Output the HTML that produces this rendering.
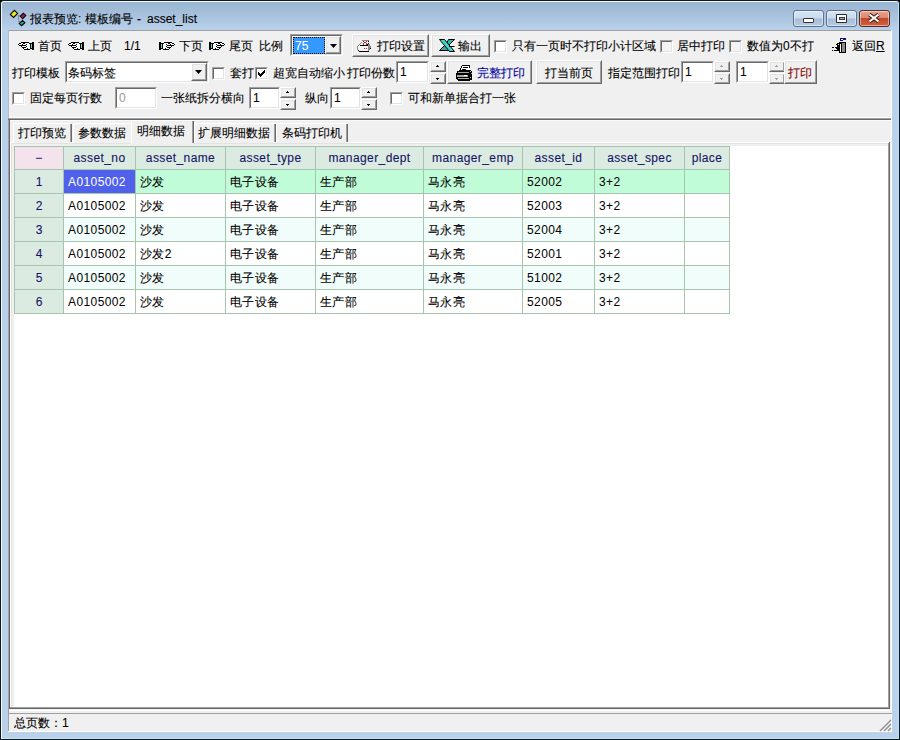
<!DOCTYPE html>
<html><head><meta charset="utf-8"><style>
html,body{margin:0;padding:0;width:900px;height:740px;overflow:hidden;background:#000}
body>div,body>svg{position:absolute;box-sizing:content-box}
.t{position:absolute;font-family:"Liberation Sans",sans-serif;font-size:12px;line-height:14px;white-space:nowrap;-webkit-text-stroke:0.1px currentColor}
</style></head><body>
<div style="left:0;top:0;width:900px;height:740px;background:#000"></div>
<div style="left:0;top:0;width:898px;height:738px;border:1px solid #0c1a22;border-radius:4px 4px 0 0;background:#b9d1ea;overflow:hidden"><div style="position:absolute;left:0;top:0;width:898px;height:738px;border-radius:3px 3px 0 0;box-shadow:inset 1px 1px 0 #f4f8fc, inset -1px -1px 0 #bfe0ee"></div></div>
<div style="left:2px;top:2px;width:896px;height:28px;background:linear-gradient(#99b4d1,#b9d1ea);border-radius:2px 2px 0 0"></div>
<svg style="left:0;top:0" width="30" height="30">
<path d="M17.5 15.5 H20 M18.5 15.5 V21.5 H20.5" fill="none" stroke="#8c8c8c"/>
<path d="M14.5 10.3 L17.6 13.4 L13.5 17.5 L10.3 14.4 Z" fill="#f0ea10" stroke="#000" stroke-width="1.1"/>
<path d="M23.3 13.2 L25.8 15.6 L22.6 18.7 L20.2 16.3 Z" fill="#b0106a" stroke="#000" stroke-width="1.1"/>
<path d="M22.5 20.4 L24.9 22.7 L21.6 25.7 L19.2 23.4 Z" fill="#20a8a8" stroke="#000" stroke-width="1.1"/>
</svg>
<div class="t" style="left:30px;top:12px;color:#000;">报表预览: 模板编号</div>
<div class="t" style="left:137px;top:12px;color:#000;">-</div>
<div class="t" style="left:147px;top:12px;color:#000;">asset_list</div>
<div style="left:793px;top:10px;width:29px;height:15px;border:1px solid #5e7290;border-radius:3px;background:linear-gradient(#d6e4f2 0%,#c8daee 48%,#a6bdd6 52%,#b6cce4 100%);box-shadow:inset 0 0 0 1px rgba(255,255,255,0.45)"></div>
<div style="left:826px;top:10px;width:29px;height:15px;border:1px solid #5e7290;border-radius:3px;background:linear-gradient(#d6e4f2 0%,#c8daee 48%,#a6bdd6 52%,#b6cce4 100%);box-shadow:inset 0 0 0 1px rgba(255,255,255,0.45)"></div>
<div style="left:859px;top:10px;width:29px;height:15px;border:1px solid #5b2a22;border-radius:3px;background:linear-gradient(#e8a190 0%,#d98a75 45%,#c4482c 50%,#d2623f 100%);box-shadow:inset 0 0 0 1px rgba(255,255,255,0.45)"></div>
<div style="left:803px;top:18px;width:9px;height:3px;background:#fff;border:1px solid #333;border-radius:1px"></div>
<div style="left:836px;top:14px;width:11px;height:9px;background:#2c2c34;border-radius:1px"></div>
<div style="left:837px;top:15px;width:9px;height:7px;background:#fafafa"></div>
<div style="left:839px;top:17px;width:6px;height:3px;background:#3a3a44"></div>
<div style="left:840px;top:18px;width:4px;height:1px;background:#9aa8b8"></div>
<svg style="left:868px;top:13px" width="12" height="10"><path d="M1.5 1.5 L10.5 8.5 M10.5 1.5 L1.5 8.5" stroke="#3a1a14" stroke-width="4"/><path d="M1.5 1.5 L10.5 8.5 M10.5 1.5 L1.5 8.5" stroke="#fff" stroke-width="2.2"/></svg>
<div style="left:8px;top:30px;width:884px;height:702px;background:#f0f0f0"></div>
<div style="left:8px;top:30px;width:884px;height:1px;background:#a0a0a0"></div>
<div style="left:8px;top:30px;width:1px;height:88px;background:#b4bcc6"></div>
<div style="left:8px;top:118px;width:1px;height:614px;background:#a0a0a0"></div>
<div style="left:891px;top:30px;width:1px;height:702px;background:#fff"></div>
<div style="left:8px;top:731px;width:884px;height:1px;background:#fff"></div>
<div style="left:9px;top:117px;width:882px;height:1px;background:#fff"></div>
<div style="left:8px;top:118px;width:883px;height:1px;background:#a0a0a0"></div>
<div style="left:8px;top:119px;width:883px;height:1px;background:#696969"></div>
<div style="left:10px;top:120px;width:881px;height:1px;background:#fafafa"></div>
<svg style="left:18px;top:42px" width="16" height="8" shape-rendering="crispEdges"><rect x="3" y="0" width="1" height="1" fill="#000"/><rect x="4" y="0" width="1" height="1" fill="#000"/><rect x="5" y="0" width="1" height="1" fill="#000"/><rect x="6" y="0" width="1" height="1" fill="#000"/><rect x="7" y="0" width="1" height="1" fill="#000"/><rect x="8" y="0" width="1" height="1" fill="#000"/><rect x="9" y="0" width="1" height="1" fill="#000"/><rect x="10" y="0" width="1" height="1" fill="#000"/><rect x="14" y="0" width="1" height="1" fill="#000"/><rect x="15" y="0" width="1" height="1" fill="#000"/><rect x="1" y="1" width="1" height="1" fill="#000"/><rect x="2" y="1" width="1" height="1" fill="#000"/><rect x="3" y="1" width="1" height="1" fill="#fff"/><rect x="4" y="1" width="1" height="1" fill="#fff"/><rect x="5" y="1" width="1" height="1" fill="#000"/><rect x="6" y="1" width="1" height="1" fill="#000"/><rect x="7" y="1" width="1" height="1" fill="#fff"/><rect x="8" y="1" width="1" height="1" fill="#fff"/><rect x="9" y="1" width="1" height="1" fill="#fff"/><rect x="10" y="1" width="1" height="1" fill="#fff"/><rect x="11" y="1" width="1" height="1" fill="#000"/><rect x="12" y="1" width="1" height="1" fill="#000"/><rect x="13" y="1" width="1" height="1" fill="#000"/><rect x="14" y="1" width="1" height="1" fill="#000"/><rect x="15" y="1" width="1" height="1" fill="#000"/><rect x="0" y="2" width="1" height="1" fill="#000"/><rect x="1" y="2" width="1" height="1" fill="#fff"/><rect x="2" y="2" width="1" height="1" fill="#fff"/><rect x="3" y="2" width="1" height="1" fill="#fff"/><rect x="4" y="2" width="1" height="1" fill="#000"/><rect x="5" y="2" width="1" height="1" fill="#fff"/><rect x="6" y="2" width="1" height="1" fill="#fff"/><rect x="7" y="2" width="1" height="1" fill="#fff"/><rect x="8" y="2" width="1" height="1" fill="#000"/><rect x="9" y="2" width="1" height="1" fill="#fff"/><rect x="10" y="2" width="1" height="1" fill="#fff"/><rect x="11" y="2" width="1" height="1" fill="#fff"/><rect x="12" y="2" width="1" height="1" fill="#000"/><rect x="13" y="2" width="1" height="1" fill="#70d8b8"/><rect x="14" y="2" width="1" height="1" fill="#000"/><rect x="15" y="2" width="1" height="1" fill="#000"/><rect x="1" y="3" width="1" height="1" fill="#000"/><rect x="2" y="3" width="1" height="1" fill="#000"/><rect x="3" y="3" width="1" height="1" fill="#000"/><rect x="4" y="3" width="1" height="1" fill="#000"/><rect x="5" y="3" width="1" height="1" fill="#000"/><rect x="6" y="3" width="1" height="1" fill="#000"/><rect x="7" y="3" width="1" height="1" fill="#000"/><rect x="8" y="3" width="1" height="1" fill="#fff"/><rect x="9" y="3" width="1" height="1" fill="#fff"/><rect x="10" y="3" width="1" height="1" fill="#fff"/><rect x="11" y="3" width="1" height="1" fill="#fff"/><rect x="12" y="3" width="1" height="1" fill="#000"/><rect x="13" y="3" width="1" height="1" fill="#70d8b8"/><rect x="14" y="3" width="1" height="1" fill="#000"/><rect x="15" y="3" width="1" height="1" fill="#000"/><rect x="3" y="4" width="1" height="1" fill="#000"/><rect x="4" y="4" width="1" height="1" fill="#fff"/><rect x="5" y="4" width="1" height="1" fill="#fff"/><rect x="6" y="4" width="1" height="1" fill="#fff"/><rect x="7" y="4" width="1" height="1" fill="#fff"/><rect x="8" y="4" width="1" height="1" fill="#000"/><rect x="9" y="4" width="1" height="1" fill="#fff"/><rect x="10" y="4" width="1" height="1" fill="#fff"/><rect x="11" y="4" width="1" height="1" fill="#fff"/><rect x="12" y="4" width="1" height="1" fill="#000"/><rect x="13" y="4" width="1" height="1" fill="#70d8b8"/><rect x="14" y="4" width="1" height="1" fill="#000"/><rect x="15" y="4" width="1" height="1" fill="#000"/><rect x="4" y="5" width="1" height="1" fill="#000"/><rect x="5" y="5" width="1" height="1" fill="#000"/><rect x="6" y="5" width="1" height="1" fill="#000"/><rect x="7" y="5" width="1" height="1" fill="#000"/><rect x="8" y="5" width="1" height="1" fill="#fff"/><rect x="9" y="5" width="1" height="1" fill="#fff"/><rect x="10" y="5" width="1" height="1" fill="#fff"/><rect x="11" y="5" width="1" height="1" fill="#fff"/><rect x="12" y="5" width="1" height="1" fill="#000"/><rect x="13" y="5" width="1" height="1" fill="#70d8b8"/><rect x="14" y="5" width="1" height="1" fill="#000"/><rect x="15" y="5" width="1" height="1" fill="#000"/><rect x="5" y="6" width="1" height="1" fill="#000"/><rect x="6" y="6" width="1" height="1" fill="#fff"/><rect x="7" y="6" width="1" height="1" fill="#fff"/><rect x="8" y="6" width="1" height="1" fill="#fff"/><rect x="9" y="6" width="1" height="1" fill="#000"/><rect x="10" y="6" width="1" height="1" fill="#fff"/><rect x="11" y="6" width="1" height="1" fill="#fff"/><rect x="12" y="6" width="1" height="1" fill="#000"/><rect x="13" y="6" width="1" height="1" fill="#000"/><rect x="14" y="6" width="1" height="1" fill="#000"/><rect x="15" y="6" width="1" height="1" fill="#000"/><rect x="6" y="7" width="1" height="1" fill="#000"/><rect x="7" y="7" width="1" height="1" fill="#000"/><rect x="8" y="7" width="1" height="1" fill="#000"/><rect x="9" y="7" width="1" height="1" fill="#000"/><rect x="10" y="7" width="1" height="1" fill="#000"/><rect x="11" y="7" width="1" height="1" fill="#000"/><rect x="14" y="7" width="1" height="1" fill="#000"/><rect x="15" y="7" width="1" height="1" fill="#000"/></svg>
<div class="t" style="left:38px;top:39px;color:#000;">首页</div>
<svg style="left:68px;top:42px" width="16" height="8" shape-rendering="crispEdges"><rect x="3" y="0" width="1" height="1" fill="#000"/><rect x="4" y="0" width="1" height="1" fill="#000"/><rect x="5" y="0" width="1" height="1" fill="#000"/><rect x="6" y="0" width="1" height="1" fill="#000"/><rect x="7" y="0" width="1" height="1" fill="#000"/><rect x="8" y="0" width="1" height="1" fill="#000"/><rect x="9" y="0" width="1" height="1" fill="#000"/><rect x="10" y="0" width="1" height="1" fill="#000"/><rect x="14" y="0" width="1" height="1" fill="#000"/><rect x="15" y="0" width="1" height="1" fill="#000"/><rect x="1" y="1" width="1" height="1" fill="#000"/><rect x="2" y="1" width="1" height="1" fill="#000"/><rect x="3" y="1" width="1" height="1" fill="#fff"/><rect x="4" y="1" width="1" height="1" fill="#fff"/><rect x="5" y="1" width="1" height="1" fill="#000"/><rect x="6" y="1" width="1" height="1" fill="#000"/><rect x="7" y="1" width="1" height="1" fill="#fff"/><rect x="8" y="1" width="1" height="1" fill="#fff"/><rect x="9" y="1" width="1" height="1" fill="#fff"/><rect x="10" y="1" width="1" height="1" fill="#fff"/><rect x="11" y="1" width="1" height="1" fill="#000"/><rect x="12" y="1" width="1" height="1" fill="#000"/><rect x="13" y="1" width="1" height="1" fill="#000"/><rect x="14" y="1" width="1" height="1" fill="#000"/><rect x="15" y="1" width="1" height="1" fill="#000"/><rect x="0" y="2" width="1" height="1" fill="#000"/><rect x="1" y="2" width="1" height="1" fill="#fff"/><rect x="2" y="2" width="1" height="1" fill="#fff"/><rect x="3" y="2" width="1" height="1" fill="#fff"/><rect x="4" y="2" width="1" height="1" fill="#000"/><rect x="5" y="2" width="1" height="1" fill="#fff"/><rect x="6" y="2" width="1" height="1" fill="#fff"/><rect x="7" y="2" width="1" height="1" fill="#fff"/><rect x="8" y="2" width="1" height="1" fill="#000"/><rect x="9" y="2" width="1" height="1" fill="#fff"/><rect x="10" y="2" width="1" height="1" fill="#fff"/><rect x="11" y="2" width="1" height="1" fill="#fff"/><rect x="12" y="2" width="1" height="1" fill="#000"/><rect x="13" y="2" width="1" height="1" fill="#70d8b8"/><rect x="14" y="2" width="1" height="1" fill="#000"/><rect x="15" y="2" width="1" height="1" fill="#000"/><rect x="1" y="3" width="1" height="1" fill="#000"/><rect x="2" y="3" width="1" height="1" fill="#000"/><rect x="3" y="3" width="1" height="1" fill="#000"/><rect x="4" y="3" width="1" height="1" fill="#000"/><rect x="5" y="3" width="1" height="1" fill="#000"/><rect x="6" y="3" width="1" height="1" fill="#000"/><rect x="7" y="3" width="1" height="1" fill="#000"/><rect x="8" y="3" width="1" height="1" fill="#fff"/><rect x="9" y="3" width="1" height="1" fill="#fff"/><rect x="10" y="3" width="1" height="1" fill="#fff"/><rect x="11" y="3" width="1" height="1" fill="#fff"/><rect x="12" y="3" width="1" height="1" fill="#000"/><rect x="13" y="3" width="1" height="1" fill="#70d8b8"/><rect x="14" y="3" width="1" height="1" fill="#000"/><rect x="15" y="3" width="1" height="1" fill="#000"/><rect x="3" y="4" width="1" height="1" fill="#000"/><rect x="4" y="4" width="1" height="1" fill="#fff"/><rect x="5" y="4" width="1" height="1" fill="#fff"/><rect x="6" y="4" width="1" height="1" fill="#fff"/><rect x="7" y="4" width="1" height="1" fill="#fff"/><rect x="8" y="4" width="1" height="1" fill="#000"/><rect x="9" y="4" width="1" height="1" fill="#fff"/><rect x="10" y="4" width="1" height="1" fill="#fff"/><rect x="11" y="4" width="1" height="1" fill="#fff"/><rect x="12" y="4" width="1" height="1" fill="#000"/><rect x="13" y="4" width="1" height="1" fill="#70d8b8"/><rect x="14" y="4" width="1" height="1" fill="#000"/><rect x="15" y="4" width="1" height="1" fill="#000"/><rect x="4" y="5" width="1" height="1" fill="#000"/><rect x="5" y="5" width="1" height="1" fill="#000"/><rect x="6" y="5" width="1" height="1" fill="#000"/><rect x="7" y="5" width="1" height="1" fill="#000"/><rect x="8" y="5" width="1" height="1" fill="#fff"/><rect x="9" y="5" width="1" height="1" fill="#fff"/><rect x="10" y="5" width="1" height="1" fill="#fff"/><rect x="11" y="5" width="1" height="1" fill="#fff"/><rect x="12" y="5" width="1" height="1" fill="#000"/><rect x="13" y="5" width="1" height="1" fill="#70d8b8"/><rect x="14" y="5" width="1" height="1" fill="#000"/><rect x="15" y="5" width="1" height="1" fill="#000"/><rect x="5" y="6" width="1" height="1" fill="#000"/><rect x="6" y="6" width="1" height="1" fill="#fff"/><rect x="7" y="6" width="1" height="1" fill="#fff"/><rect x="8" y="6" width="1" height="1" fill="#fff"/><rect x="9" y="6" width="1" height="1" fill="#000"/><rect x="10" y="6" width="1" height="1" fill="#fff"/><rect x="11" y="6" width="1" height="1" fill="#fff"/><rect x="12" y="6" width="1" height="1" fill="#000"/><rect x="13" y="6" width="1" height="1" fill="#000"/><rect x="14" y="6" width="1" height="1" fill="#000"/><rect x="15" y="6" width="1" height="1" fill="#000"/><rect x="6" y="7" width="1" height="1" fill="#000"/><rect x="7" y="7" width="1" height="1" fill="#000"/><rect x="8" y="7" width="1" height="1" fill="#000"/><rect x="9" y="7" width="1" height="1" fill="#000"/><rect x="10" y="7" width="1" height="1" fill="#000"/><rect x="11" y="7" width="1" height="1" fill="#000"/><rect x="14" y="7" width="1" height="1" fill="#000"/><rect x="15" y="7" width="1" height="1" fill="#000"/></svg>
<div class="t" style="left:88px;top:39px;color:#000;">上页</div>
<div class="t" style="left:124px;top:39px;color:#000;">1/1</div>
<svg style="left:159px;top:42px" width="16" height="8" shape-rendering="crispEdges"><rect x="12" y="0" width="1" height="1" fill="#000"/><rect x="11" y="0" width="1" height="1" fill="#000"/><rect x="10" y="0" width="1" height="1" fill="#000"/><rect x="9" y="0" width="1" height="1" fill="#000"/><rect x="8" y="0" width="1" height="1" fill="#000"/><rect x="7" y="0" width="1" height="1" fill="#000"/><rect x="6" y="0" width="1" height="1" fill="#000"/><rect x="5" y="0" width="1" height="1" fill="#000"/><rect x="1" y="0" width="1" height="1" fill="#000"/><rect x="0" y="0" width="1" height="1" fill="#000"/><rect x="14" y="1" width="1" height="1" fill="#000"/><rect x="13" y="1" width="1" height="1" fill="#000"/><rect x="12" y="1" width="1" height="1" fill="#fff"/><rect x="11" y="1" width="1" height="1" fill="#fff"/><rect x="10" y="1" width="1" height="1" fill="#000"/><rect x="9" y="1" width="1" height="1" fill="#000"/><rect x="8" y="1" width="1" height="1" fill="#fff"/><rect x="7" y="1" width="1" height="1" fill="#fff"/><rect x="6" y="1" width="1" height="1" fill="#fff"/><rect x="5" y="1" width="1" height="1" fill="#fff"/><rect x="4" y="1" width="1" height="1" fill="#000"/><rect x="3" y="1" width="1" height="1" fill="#000"/><rect x="2" y="1" width="1" height="1" fill="#000"/><rect x="1" y="1" width="1" height="1" fill="#000"/><rect x="0" y="1" width="1" height="1" fill="#000"/><rect x="15" y="2" width="1" height="1" fill="#000"/><rect x="14" y="2" width="1" height="1" fill="#fff"/><rect x="13" y="2" width="1" height="1" fill="#fff"/><rect x="12" y="2" width="1" height="1" fill="#fff"/><rect x="11" y="2" width="1" height="1" fill="#000"/><rect x="10" y="2" width="1" height="1" fill="#fff"/><rect x="9" y="2" width="1" height="1" fill="#fff"/><rect x="8" y="2" width="1" height="1" fill="#fff"/><rect x="7" y="2" width="1" height="1" fill="#000"/><rect x="6" y="2" width="1" height="1" fill="#fff"/><rect x="5" y="2" width="1" height="1" fill="#fff"/><rect x="4" y="2" width="1" height="1" fill="#fff"/><rect x="3" y="2" width="1" height="1" fill="#000"/><rect x="2" y="2" width="1" height="1" fill="#70d8b8"/><rect x="1" y="2" width="1" height="1" fill="#000"/><rect x="0" y="2" width="1" height="1" fill="#000"/><rect x="14" y="3" width="1" height="1" fill="#000"/><rect x="13" y="3" width="1" height="1" fill="#000"/><rect x="12" y="3" width="1" height="1" fill="#000"/><rect x="11" y="3" width="1" height="1" fill="#000"/><rect x="10" y="3" width="1" height="1" fill="#000"/><rect x="9" y="3" width="1" height="1" fill="#000"/><rect x="8" y="3" width="1" height="1" fill="#000"/><rect x="7" y="3" width="1" height="1" fill="#fff"/><rect x="6" y="3" width="1" height="1" fill="#fff"/><rect x="5" y="3" width="1" height="1" fill="#fff"/><rect x="4" y="3" width="1" height="1" fill="#fff"/><rect x="3" y="3" width="1" height="1" fill="#000"/><rect x="2" y="3" width="1" height="1" fill="#70d8b8"/><rect x="1" y="3" width="1" height="1" fill="#000"/><rect x="0" y="3" width="1" height="1" fill="#000"/><rect x="12" y="4" width="1" height="1" fill="#000"/><rect x="11" y="4" width="1" height="1" fill="#fff"/><rect x="10" y="4" width="1" height="1" fill="#fff"/><rect x="9" y="4" width="1" height="1" fill="#fff"/><rect x="8" y="4" width="1" height="1" fill="#fff"/><rect x="7" y="4" width="1" height="1" fill="#000"/><rect x="6" y="4" width="1" height="1" fill="#fff"/><rect x="5" y="4" width="1" height="1" fill="#fff"/><rect x="4" y="4" width="1" height="1" fill="#fff"/><rect x="3" y="4" width="1" height="1" fill="#000"/><rect x="2" y="4" width="1" height="1" fill="#70d8b8"/><rect x="1" y="4" width="1" height="1" fill="#000"/><rect x="0" y="4" width="1" height="1" fill="#000"/><rect x="11" y="5" width="1" height="1" fill="#000"/><rect x="10" y="5" width="1" height="1" fill="#000"/><rect x="9" y="5" width="1" height="1" fill="#000"/><rect x="8" y="5" width="1" height="1" fill="#000"/><rect x="7" y="5" width="1" height="1" fill="#fff"/><rect x="6" y="5" width="1" height="1" fill="#fff"/><rect x="5" y="5" width="1" height="1" fill="#fff"/><rect x="4" y="5" width="1" height="1" fill="#fff"/><rect x="3" y="5" width="1" height="1" fill="#000"/><rect x="2" y="5" width="1" height="1" fill="#70d8b8"/><rect x="1" y="5" width="1" height="1" fill="#000"/><rect x="0" y="5" width="1" height="1" fill="#000"/><rect x="10" y="6" width="1" height="1" fill="#000"/><rect x="9" y="6" width="1" height="1" fill="#fff"/><rect x="8" y="6" width="1" height="1" fill="#fff"/><rect x="7" y="6" width="1" height="1" fill="#fff"/><rect x="6" y="6" width="1" height="1" fill="#000"/><rect x="5" y="6" width="1" height="1" fill="#fff"/><rect x="4" y="6" width="1" height="1" fill="#fff"/><rect x="3" y="6" width="1" height="1" fill="#000"/><rect x="2" y="6" width="1" height="1" fill="#000"/><rect x="1" y="6" width="1" height="1" fill="#000"/><rect x="0" y="6" width="1" height="1" fill="#000"/><rect x="9" y="7" width="1" height="1" fill="#000"/><rect x="8" y="7" width="1" height="1" fill="#000"/><rect x="7" y="7" width="1" height="1" fill="#000"/><rect x="6" y="7" width="1" height="1" fill="#000"/><rect x="5" y="7" width="1" height="1" fill="#000"/><rect x="4" y="7" width="1" height="1" fill="#000"/><rect x="1" y="7" width="1" height="1" fill="#000"/><rect x="0" y="7" width="1" height="1" fill="#000"/></svg>
<div class="t" style="left:179px;top:39px;color:#000;">下页</div>
<svg style="left:209px;top:42px" width="16" height="8" shape-rendering="crispEdges"><rect x="12" y="0" width="1" height="1" fill="#000"/><rect x="11" y="0" width="1" height="1" fill="#000"/><rect x="10" y="0" width="1" height="1" fill="#000"/><rect x="9" y="0" width="1" height="1" fill="#000"/><rect x="8" y="0" width="1" height="1" fill="#000"/><rect x="7" y="0" width="1" height="1" fill="#000"/><rect x="6" y="0" width="1" height="1" fill="#000"/><rect x="5" y="0" width="1" height="1" fill="#000"/><rect x="1" y="0" width="1" height="1" fill="#000"/><rect x="0" y="0" width="1" height="1" fill="#000"/><rect x="14" y="1" width="1" height="1" fill="#000"/><rect x="13" y="1" width="1" height="1" fill="#000"/><rect x="12" y="1" width="1" height="1" fill="#fff"/><rect x="11" y="1" width="1" height="1" fill="#fff"/><rect x="10" y="1" width="1" height="1" fill="#000"/><rect x="9" y="1" width="1" height="1" fill="#000"/><rect x="8" y="1" width="1" height="1" fill="#fff"/><rect x="7" y="1" width="1" height="1" fill="#fff"/><rect x="6" y="1" width="1" height="1" fill="#fff"/><rect x="5" y="1" width="1" height="1" fill="#fff"/><rect x="4" y="1" width="1" height="1" fill="#000"/><rect x="3" y="1" width="1" height="1" fill="#000"/><rect x="2" y="1" width="1" height="1" fill="#000"/><rect x="1" y="1" width="1" height="1" fill="#000"/><rect x="0" y="1" width="1" height="1" fill="#000"/><rect x="15" y="2" width="1" height="1" fill="#000"/><rect x="14" y="2" width="1" height="1" fill="#fff"/><rect x="13" y="2" width="1" height="1" fill="#fff"/><rect x="12" y="2" width="1" height="1" fill="#fff"/><rect x="11" y="2" width="1" height="1" fill="#000"/><rect x="10" y="2" width="1" height="1" fill="#fff"/><rect x="9" y="2" width="1" height="1" fill="#fff"/><rect x="8" y="2" width="1" height="1" fill="#fff"/><rect x="7" y="2" width="1" height="1" fill="#000"/><rect x="6" y="2" width="1" height="1" fill="#fff"/><rect x="5" y="2" width="1" height="1" fill="#fff"/><rect x="4" y="2" width="1" height="1" fill="#fff"/><rect x="3" y="2" width="1" height="1" fill="#000"/><rect x="2" y="2" width="1" height="1" fill="#70d8b8"/><rect x="1" y="2" width="1" height="1" fill="#000"/><rect x="0" y="2" width="1" height="1" fill="#000"/><rect x="14" y="3" width="1" height="1" fill="#000"/><rect x="13" y="3" width="1" height="1" fill="#000"/><rect x="12" y="3" width="1" height="1" fill="#000"/><rect x="11" y="3" width="1" height="1" fill="#000"/><rect x="10" y="3" width="1" height="1" fill="#000"/><rect x="9" y="3" width="1" height="1" fill="#000"/><rect x="8" y="3" width="1" height="1" fill="#000"/><rect x="7" y="3" width="1" height="1" fill="#fff"/><rect x="6" y="3" width="1" height="1" fill="#fff"/><rect x="5" y="3" width="1" height="1" fill="#fff"/><rect x="4" y="3" width="1" height="1" fill="#fff"/><rect x="3" y="3" width="1" height="1" fill="#000"/><rect x="2" y="3" width="1" height="1" fill="#70d8b8"/><rect x="1" y="3" width="1" height="1" fill="#000"/><rect x="0" y="3" width="1" height="1" fill="#000"/><rect x="12" y="4" width="1" height="1" fill="#000"/><rect x="11" y="4" width="1" height="1" fill="#fff"/><rect x="10" y="4" width="1" height="1" fill="#fff"/><rect x="9" y="4" width="1" height="1" fill="#fff"/><rect x="8" y="4" width="1" height="1" fill="#fff"/><rect x="7" y="4" width="1" height="1" fill="#000"/><rect x="6" y="4" width="1" height="1" fill="#fff"/><rect x="5" y="4" width="1" height="1" fill="#fff"/><rect x="4" y="4" width="1" height="1" fill="#fff"/><rect x="3" y="4" width="1" height="1" fill="#000"/><rect x="2" y="4" width="1" height="1" fill="#70d8b8"/><rect x="1" y="4" width="1" height="1" fill="#000"/><rect x="0" y="4" width="1" height="1" fill="#000"/><rect x="11" y="5" width="1" height="1" fill="#000"/><rect x="10" y="5" width="1" height="1" fill="#000"/><rect x="9" y="5" width="1" height="1" fill="#000"/><rect x="8" y="5" width="1" height="1" fill="#000"/><rect x="7" y="5" width="1" height="1" fill="#fff"/><rect x="6" y="5" width="1" height="1" fill="#fff"/><rect x="5" y="5" width="1" height="1" fill="#fff"/><rect x="4" y="5" width="1" height="1" fill="#fff"/><rect x="3" y="5" width="1" height="1" fill="#000"/><rect x="2" y="5" width="1" height="1" fill="#70d8b8"/><rect x="1" y="5" width="1" height="1" fill="#000"/><rect x="0" y="5" width="1" height="1" fill="#000"/><rect x="10" y="6" width="1" height="1" fill="#000"/><rect x="9" y="6" width="1" height="1" fill="#fff"/><rect x="8" y="6" width="1" height="1" fill="#fff"/><rect x="7" y="6" width="1" height="1" fill="#fff"/><rect x="6" y="6" width="1" height="1" fill="#000"/><rect x="5" y="6" width="1" height="1" fill="#fff"/><rect x="4" y="6" width="1" height="1" fill="#fff"/><rect x="3" y="6" width="1" height="1" fill="#000"/><rect x="2" y="6" width="1" height="1" fill="#000"/><rect x="1" y="6" width="1" height="1" fill="#000"/><rect x="0" y="6" width="1" height="1" fill="#000"/><rect x="9" y="7" width="1" height="1" fill="#000"/><rect x="8" y="7" width="1" height="1" fill="#000"/><rect x="7" y="7" width="1" height="1" fill="#000"/><rect x="6" y="7" width="1" height="1" fill="#000"/><rect x="5" y="7" width="1" height="1" fill="#000"/><rect x="4" y="7" width="1" height="1" fill="#000"/><rect x="1" y="7" width="1" height="1" fill="#000"/><rect x="0" y="7" width="1" height="1" fill="#000"/></svg>
<div class="t" style="left:229px;top:39px;color:#000;">尾页</div>
<div class="t" style="left:259px;top:39px;color:#000;">比例</div>
<div style="left:290px;top:34px;width:51px;height:20px;background:#fff;border-style:solid;border-width:1px;border-color:#a0a0a0 #fff #fff #a0a0a0;"></div>
<div style="left:291px;top:35px;width:49px;height:18px;border-style:solid;border-width:1px;border-color:#696969 #e3e3e3 #e3e3e3 #696969;"></div>
<div style="left:293px;top:37px;width:30px;height:15px;background:#3399ff;border:1px dotted #000"></div>
<div class="t" style="left:295px;top:39px;color:#fff;">75</div>
<div style="left:325px;top:36px;width:14px;height:16px;background:#f0f0f0;border-style:solid;border-width:1px;border-color:#fff #696969 #696969 #fff;"></div>
<div style="left:326px;top:37px;width:12px;height:14px;border-style:solid;border-width:1px;border-color:#e3e3e3 #a0a0a0 #a0a0a0 #e3e3e3;"></div>
<svg style="left:330px;top:44px" width="7" height="4"><path d="M0 0h7l-3.5 4z" fill="#000"/></svg>
<div style="left:352px;top:34px;width:75px;height:21px;background:#f0f0f0;border-style:solid;border-width:1px;border-color:#fff #696969 #696969 #fff;"></div>
<div style="left:353px;top:35px;width:73px;height:19px;border-style:solid;border-width:1px;border-color:#e3e3e3 #a0a0a0 #a0a0a0 #e3e3e3;"></div>
<svg style="left:357px;top:40px" width="15" height="12" shape-rendering="crispEdges"><rect x="5" y="0" width="1" height="1" fill="#888"/><rect x="6" y="0" width="1" height="1" fill="#888"/><rect x="7" y="0" width="1" height="1" fill="#888"/><rect x="8" y="0" width="1" height="1" fill="#888"/><rect x="9" y="0" width="1" height="1" fill="#888"/><rect x="10" y="0" width="1" height="1" fill="#888"/><rect x="11" y="0" width="1" height="1" fill="#888"/><rect x="6" y="1" width="1" height="1" fill="#b02030"/><rect x="9" y="1" width="1" height="1" fill="#b02030"/><rect x="11" y="1" width="1" height="1" fill="#000"/><rect x="4" y="2" width="1" height="1" fill="#888"/><rect x="7" y="2" width="1" height="1" fill="#b02030"/><rect x="8" y="2" width="1" height="1" fill="#b02030"/><rect x="3" y="3" width="1" height="1" fill="#888"/><rect x="6" y="3" width="1" height="1" fill="#b02030"/><rect x="9" y="3" width="1" height="1" fill="#b02030"/><rect x="11" y="3" width="1" height="1" fill="#000"/><rect x="2" y="4" width="1" height="1" fill="#888"/><rect x="6" y="4" width="1" height="1" fill="#b02030"/><rect x="9" y="4" width="1" height="1" fill="#b02030"/><rect x="10" y="4" width="1" height="1" fill="#000"/><rect x="11" y="4" width="1" height="1" fill="#888"/><rect x="12" y="4" width="1" height="1" fill="#888"/><rect x="1" y="5" width="1" height="1" fill="#888"/><rect x="3" y="5" width="1" height="1" fill="#000"/><rect x="4" y="5" width="1" height="1" fill="#000"/><rect x="5" y="5" width="1" height="1" fill="#000"/><rect x="6" y="5" width="1" height="1" fill="#000"/><rect x="7" y="5" width="1" height="1" fill="#000"/><rect x="8" y="5" width="1" height="1" fill="#000"/><rect x="9" y="5" width="1" height="1" fill="#000"/><rect x="10" y="5" width="1" height="1" fill="#000"/><rect x="11" y="5" width="1" height="1" fill="#888"/><rect x="12" y="5" width="1" height="1" fill="#888"/><rect x="0" y="6" width="1" height="1" fill="#888"/><rect x="1" y="6" width="1" height="1" fill="#f4f4f4"/><rect x="2" y="6" width="1" height="1" fill="#f4f4f4"/><rect x="3" y="6" width="1" height="1" fill="#f4f4f4"/><rect x="4" y="6" width="1" height="1" fill="#f4f4f4"/><rect x="5" y="6" width="1" height="1" fill="#f4f4f4"/><rect x="6" y="6" width="1" height="1" fill="#f4f4f4"/><rect x="7" y="6" width="1" height="1" fill="#f4f4f4"/><rect x="8" y="6" width="1" height="1" fill="#f4f4f4"/><rect x="9" y="6" width="1" height="1" fill="#f4f4f4"/><rect x="10" y="6" width="1" height="1" fill="#f4f4f4"/><rect x="11" y="6" width="1" height="1" fill="#888"/><rect x="12" y="6" width="1" height="1" fill="#888"/><rect x="13" y="6" width="1" height="1" fill="#888"/><rect x="0" y="7" width="1" height="1" fill="#888"/><rect x="1" y="7" width="1" height="1" fill="#f4f4f4"/><rect x="2" y="7" width="1" height="1" fill="#f4f4f4"/><rect x="3" y="7" width="1" height="1" fill="#f4f4f4"/><rect x="4" y="7" width="1" height="1" fill="#f4f4f4"/><rect x="5" y="7" width="1" height="1" fill="#f4f4f4"/><rect x="6" y="7" width="1" height="1" fill="#f4f4f4"/><rect x="7" y="7" width="1" height="1" fill="#f4f4f4"/><rect x="8" y="7" width="1" height="1" fill="#f4f4f4"/><rect x="9" y="7" width="1" height="1" fill="#f4f4f4"/><rect x="10" y="7" width="1" height="1" fill="#f4f4f4"/><rect x="11" y="7" width="1" height="1" fill="#888"/><rect x="12" y="7" width="1" height="1" fill="#888"/><rect x="13" y="7" width="1" height="1" fill="#888"/><rect x="0" y="8" width="1" height="1" fill="#888"/><rect x="1" y="8" width="1" height="1" fill="#f4f4f4"/><rect x="2" y="8" width="1" height="1" fill="#f4f4f4"/><rect x="3" y="8" width="1" height="1" fill="#f4f4f4"/><rect x="4" y="8" width="1" height="1" fill="#f4f4f4"/><rect x="5" y="8" width="1" height="1" fill="#f4f4f4"/><rect x="6" y="8" width="1" height="1" fill="#f4f4f4"/><rect x="7" y="8" width="1" height="1" fill="#b02030"/><rect x="9" y="8" width="1" height="1" fill="#b02030"/><rect x="11" y="8" width="1" height="1" fill="#888"/><rect x="12" y="8" width="1" height="1" fill="#888"/><rect x="13" y="8" width="1" height="1" fill="#000"/><rect x="0" y="9" width="1" height="1" fill="#888"/><rect x="1" y="9" width="1" height="1" fill="#f4f4f4"/><rect x="2" y="9" width="1" height="1" fill="#f4f4f4"/><rect x="3" y="9" width="1" height="1" fill="#f4f4f4"/><rect x="4" y="9" width="1" height="1" fill="#f4f4f4"/><rect x="5" y="9" width="1" height="1" fill="#f4f4f4"/><rect x="6" y="9" width="1" height="1" fill="#f4f4f4"/><rect x="7" y="9" width="1" height="1" fill="#f4f4f4"/><rect x="8" y="9" width="1" height="1" fill="#f4f4f4"/><rect x="9" y="9" width="1" height="1" fill="#f4f4f4"/><rect x="10" y="9" width="1" height="1" fill="#f4f4f4"/><rect x="11" y="9" width="1" height="1" fill="#888"/><rect x="12" y="9" width="1" height="1" fill="#888"/><rect x="1" y="10" width="1" height="1" fill="#000"/><rect x="2" y="10" width="1" height="1" fill="#f4f4f4"/><rect x="3" y="10" width="1" height="1" fill="#f4f4f4"/><rect x="4" y="10" width="1" height="1" fill="#f4f4f4"/><rect x="5" y="10" width="1" height="1" fill="#f4f4f4"/><rect x="6" y="10" width="1" height="1" fill="#f4f4f4"/><rect x="7" y="10" width="1" height="1" fill="#f4f4f4"/><rect x="8" y="10" width="1" height="1" fill="#f4f4f4"/><rect x="9" y="10" width="1" height="1" fill="#f4f4f4"/><rect x="10" y="10" width="1" height="1" fill="#f4f4f4"/><rect x="11" y="10" width="1" height="1" fill="#888"/><rect x="2" y="11" width="1" height="1" fill="#000"/><rect x="3" y="11" width="1" height="1" fill="#000"/><rect x="4" y="11" width="1" height="1" fill="#000"/><rect x="5" y="11" width="1" height="1" fill="#000"/><rect x="6" y="11" width="1" height="1" fill="#000"/><rect x="7" y="11" width="1" height="1" fill="#000"/><rect x="8" y="11" width="1" height="1" fill="#000"/><rect x="9" y="11" width="1" height="1" fill="#000"/><rect x="10" y="11" width="1" height="1" fill="#000"/><rect x="11" y="11" width="1" height="1" fill="#000"/></svg>
<div class="t" style="left:377px;top:39px;color:#000;">打印设置</div>
<div style="left:431px;top:34px;width:57px;height:21px;background:#f0f0f0;border-style:solid;border-width:1px;border-color:#fff #696969 #696969 #fff;"></div>
<div style="left:432px;top:35px;width:55px;height:19px;border-style:solid;border-width:1px;border-color:#e3e3e3 #a0a0a0 #a0a0a0 #e3e3e3;"></div>
<svg style="left:439px;top:39px" width="17" height="14">
<path d="M0.5 11.5 L5.5 6.5 L8.5 9.5 L10.5 11.5 Z" fill="#3aa6a0" stroke="#000"/>
<path d="M9.5 0.5 H15.5 L9.5 6.5 L7.5 4.5 Z" fill="#2fb8b0" stroke="#000"/>
<path d="M0.5 0.5 H5.5 L15.5 12.5 H10.5 Z" fill="#40d4cc" stroke="#000"/>
<path d="M10 7.5 H15.5" stroke="#000"/>
</svg>
<div class="t" style="left:458px;top:39px;color:#000;">输出</div>
<div style="left:494px;top:40px;width:11px;height:11px;background:#fff;border-style:solid;border-width:1px;border-color:#a0a0a0 #fff #fff #a0a0a0;"></div>
<div style="left:495px;top:41px;width:9px;height:9px;border-style:solid;border-width:1px;border-color:#696969 #e3e3e3 #e3e3e3 #696969;"></div>
<div class="t" style="left:512px;top:39px;color:#000;">只有一页时不打印小计区域</div>
<div style="left:660px;top:40px;width:11px;height:11px;background:#f4f4f4;border-style:solid;border-width:1px;border-color:#a0a0a0 #fff #fff #a0a0a0;"></div>
<div style="left:661px;top:41px;width:9px;height:9px;border-style:solid;border-width:1px;border-color:#696969 #e3e3e3 #e3e3e3 #696969;"></div>
<div class="t" style="left:677px;top:39px;color:#000;">居中打印</div>
<div style="left:729px;top:40px;width:11px;height:11px;background:#f4f4f4;border-style:solid;border-width:1px;border-color:#a0a0a0 #fff #fff #a0a0a0;"></div>
<div style="left:730px;top:41px;width:9px;height:9px;border-style:solid;border-width:1px;border-color:#696969 #e3e3e3 #e3e3e3 #696969;"></div>
<div class="t" style="left:747px;top:39px;color:#000;">数值为0不打</div>
<svg style="left:831px;top:38px" width="15" height="15" shape-rendering="crispEdges"><rect x="9" y="0" width="1" height="1" fill="#101080"/><rect x="10" y="0" width="1" height="1" fill="#101080"/><rect x="11" y="0" width="1" height="1" fill="#101080"/><rect x="12" y="0" width="1" height="1" fill="#101080"/><rect x="13" y="0" width="1" height="1" fill="#101080"/><rect x="14" y="0" width="1" height="1" fill="#101080"/><rect x="9" y="1" width="1" height="1" fill="#101080"/><rect x="10" y="1" width="1" height="1" fill="#fff"/><rect x="11" y="1" width="1" height="1" fill="#fff"/><rect x="12" y="1" width="1" height="1" fill="#101080"/><rect x="13" y="1" width="1" height="1" fill="#101080"/><rect x="14" y="1" width="1" height="1" fill="#101080"/><rect x="9" y="2" width="1" height="1" fill="#101080"/><rect x="10" y="2" width="1" height="1" fill="#101080"/><rect x="11" y="2" width="1" height="1" fill="#101080"/><rect x="8" y="4" width="1" height="1" fill="#000"/><rect x="9" y="4" width="1" height="1" fill="#000"/><rect x="10" y="4" width="1" height="1" fill="#000"/><rect x="11" y="4" width="1" height="1" fill="#000"/><rect x="12" y="4" width="1" height="1" fill="#000"/><rect x="13" y="4" width="1" height="1" fill="#000"/><rect x="14" y="4" width="1" height="1" fill="#000"/><rect x="6" y="5" width="1" height="1" fill="#000"/><rect x="7" y="5" width="1" height="1" fill="#000"/><rect x="8" y="5" width="1" height="1" fill="#000"/><rect x="9" y="5" width="1" height="1" fill="#000"/><rect x="10" y="5" width="1" height="1" fill="#000"/><rect x="11" y="5" width="1" height="1" fill="#8c8c8c"/><rect x="12" y="5" width="1" height="1" fill="#8c8c8c"/><rect x="13" y="5" width="1" height="1" fill="#8c8c8c"/><rect x="14" y="5" width="1" height="1" fill="#000"/><rect x="5" y="6" width="1" height="1" fill="#000"/><rect x="6" y="6" width="1" height="1" fill="#000"/><rect x="8" y="6" width="1" height="1" fill="#000"/><rect x="9" y="6" width="1" height="1" fill="#fff"/><rect x="10" y="6" width="1" height="1" fill="#000"/><rect x="11" y="6" width="1" height="1" fill="#8c8c8c"/><rect x="12" y="6" width="1" height="1" fill="#8c8c8c"/><rect x="13" y="6" width="1" height="1" fill="#8c8c8c"/><rect x="14" y="6" width="1" height="1" fill="#000"/><rect x="6" y="7" width="1" height="1" fill="#000"/><rect x="7" y="7" width="1" height="1" fill="#000"/><rect x="8" y="7" width="1" height="1" fill="#000"/><rect x="9" y="7" width="1" height="1" fill="#fff"/><rect x="10" y="7" width="1" height="1" fill="#000"/><rect x="11" y="7" width="1" height="1" fill="#8c8c8c"/><rect x="12" y="7" width="1" height="1" fill="#8c8c8c"/><rect x="13" y="7" width="1" height="1" fill="#8c8c8c"/><rect x="14" y="7" width="1" height="1" fill="#000"/><rect x="6" y="8" width="1" height="1" fill="#000"/><rect x="7" y="8" width="1" height="1" fill="#000"/><rect x="8" y="8" width="1" height="1" fill="#000"/><rect x="9" y="8" width="1" height="1" fill="#fff"/><rect x="10" y="8" width="1" height="1" fill="#000"/><rect x="11" y="8" width="1" height="1" fill="#8c8c8c"/><rect x="12" y="8" width="1" height="1" fill="#8c8c8c"/><rect x="13" y="8" width="1" height="1" fill="#8c8c8c"/><rect x="14" y="8" width="1" height="1" fill="#000"/><rect x="1" y="9" width="1" height="1" fill="#000"/><rect x="2" y="9" width="1" height="1" fill="#000"/><rect x="4" y="9" width="1" height="1" fill="#000"/><rect x="5" y="9" width="1" height="1" fill="#000"/><rect x="6" y="9" width="1" height="1" fill="#000"/><rect x="7" y="9" width="1" height="1" fill="#000"/><rect x="8" y="9" width="1" height="1" fill="#000"/><rect x="9" y="9" width="1" height="1" fill="#fff"/><rect x="10" y="9" width="1" height="1" fill="#000"/><rect x="11" y="9" width="1" height="1" fill="#8c8c8c"/><rect x="12" y="9" width="1" height="1" fill="#8c8c8c"/><rect x="13" y="9" width="1" height="1" fill="#8c8c8c"/><rect x="14" y="9" width="1" height="1" fill="#000"/><rect x="5" y="10" width="1" height="1" fill="#000"/><rect x="6" y="10" width="1" height="1" fill="#000"/><rect x="7" y="10" width="1" height="1" fill="#000"/><rect x="8" y="10" width="1" height="1" fill="#000"/><rect x="9" y="10" width="1" height="1" fill="#fff"/><rect x="10" y="10" width="1" height="1" fill="#000"/><rect x="11" y="10" width="1" height="1" fill="#8c8c8c"/><rect x="12" y="10" width="1" height="1" fill="#8c8c8c"/><rect x="13" y="10" width="1" height="1" fill="#8c8c8c"/><rect x="14" y="10" width="1" height="1" fill="#000"/><rect x="6" y="11" width="1" height="1" fill="#000"/><rect x="7" y="11" width="1" height="1" fill="#000"/><rect x="8" y="11" width="1" height="1" fill="#000"/><rect x="9" y="11" width="1" height="1" fill="#fff"/><rect x="10" y="11" width="1" height="1" fill="#000"/><rect x="11" y="11" width="1" height="1" fill="#8c8c8c"/><rect x="12" y="11" width="1" height="1" fill="#8c8c8c"/><rect x="13" y="11" width="1" height="1" fill="#8c8c8c"/><rect x="14" y="11" width="1" height="1" fill="#000"/><rect x="1" y="12" width="1" height="1" fill="#000"/><rect x="3" y="12" width="1" height="1" fill="#000"/><rect x="4" y="12" width="1" height="1" fill="#000"/><rect x="5" y="12" width="1" height="1" fill="#000"/><rect x="6" y="12" width="1" height="1" fill="#000"/><rect x="7" y="12" width="1" height="1" fill="#000"/><rect x="8" y="12" width="1" height="1" fill="#000"/><rect x="9" y="12" width="1" height="1" fill="#fff"/><rect x="10" y="12" width="1" height="1" fill="#000"/><rect x="11" y="12" width="1" height="1" fill="#8c8c8c"/><rect x="12" y="12" width="1" height="1" fill="#8c8c8c"/><rect x="13" y="12" width="1" height="1" fill="#8c8c8c"/><rect x="14" y="12" width="1" height="1" fill="#000"/><rect x="8" y="13" width="1" height="1" fill="#000"/><rect x="9" y="13" width="1" height="1" fill="#fff"/><rect x="10" y="13" width="1" height="1" fill="#000"/><rect x="11" y="13" width="1" height="1" fill="#8c8c8c"/><rect x="12" y="13" width="1" height="1" fill="#8c8c8c"/><rect x="13" y="13" width="1" height="1" fill="#8c8c8c"/><rect x="14" y="13" width="1" height="1" fill="#000"/><rect x="8" y="14" width="1" height="1" fill="#000"/><rect x="9" y="14" width="1" height="1" fill="#000"/><rect x="10" y="14" width="1" height="1" fill="#000"/><rect x="11" y="14" width="1" height="1" fill="#000"/><rect x="12" y="14" width="1" height="1" fill="#000"/><rect x="13" y="14" width="1" height="1" fill="#000"/><rect x="14" y="14" width="1" height="1" fill="#000"/></svg>
<div class="t" style="left:852px;top:39px;color:#000;">返回<span style="text-decoration:underline">R</span></div>
<div class="t" style="left:12px;top:66px;color:#000;">打印模板</div>
<div style="left:65px;top:61px;width:142px;height:20px;background:#fff;border-style:solid;border-width:1px;border-color:#a0a0a0 #fff #fff #a0a0a0;"></div>
<div style="left:66px;top:62px;width:140px;height:18px;border-style:solid;border-width:1px;border-color:#696969 #e3e3e3 #e3e3e3 #696969;"></div>
<div class="t" style="left:68px;top:66px;color:#000;">条码标签</div>
<div style="left:191px;top:63px;width:14px;height:16px;background:#f0f0f0;border-style:solid;border-width:1px;border-color:#fff #696969 #696969 #fff;"></div>
<div style="left:192px;top:64px;width:12px;height:14px;border-style:solid;border-width:1px;border-color:#e3e3e3 #a0a0a0 #a0a0a0 #e3e3e3;"></div>
<svg style="left:195px;top:70px" width="7" height="4"><path d="M0 0h7l-3.5 4z" fill="#000"/></svg>
<div style="left:212px;top:67px;width:11px;height:11px;background:#fff;border-style:solid;border-width:1px;border-color:#a0a0a0 #fff #fff #a0a0a0;"></div>
<div style="left:213px;top:68px;width:9px;height:9px;border-style:solid;border-width:1px;border-color:#696969 #e3e3e3 #e3e3e3 #696969;"></div>
<div class="t" style="left:230px;top:66px;color:#000;">套打</div>
<div style="left:255px;top:67px;width:11px;height:11px;background:#fff;border-style:solid;border-width:1px;border-color:#a0a0a0 #fff #fff #a0a0a0;"></div>
<div style="left:256px;top:68px;width:9px;height:9px;border-style:solid;border-width:1px;border-color:#696969 #e3e3e3 #e3e3e3 #696969;"></div>
<svg style="left:258px;top:70px" width="7" height="7" shape-rendering="crispEdges"><path d="M6 0h1v3h-1zM5 1h1v3h-1zM4 2h1v3h-1zM3 3h1v3h-1zM2 4h1v3h-1zM1 3h1v3h-1zM0 2h1v3h-1z" fill="#000"/></svg>
<div class="t" style="left:273px;top:66px;color:#000;">超宽自动缩小</div>
<div class="t" style="left:347px;top:66px;color:#000;">打印份数</div>
<div style="left:396px;top:61px;width:31px;height:20px;background:#fff;border-style:solid;border-width:1px;border-color:#a0a0a0 #fff #fff #a0a0a0;"></div>
<div style="left:397px;top:62px;width:29px;height:18px;border-style:solid;border-width:1px;border-color:#696969 #e3e3e3 #e3e3e3 #696969;"></div>
<div class="t" style="left:400px;top:65px;color:#000;">1</div>
<div style="left:430px;top:61px;width:14px;height:9px;background:#f0f0f0;border-style:solid;border-width:1px;border-color:#fff #696969 #696969 #fff;"></div>
<div style="left:431px;top:62px;width:12px;height:7px;border-style:solid;border-width:1px;border-color:#e3e3e3 #a0a0a0 #a0a0a0 #e3e3e3;"></div>
<div style="left:430px;top:73px;width:14px;height:9px;background:#f0f0f0;border-style:solid;border-width:1px;border-color:#fff #696969 #696969 #fff;"></div>
<div style="left:431px;top:74px;width:12px;height:7px;border-style:solid;border-width:1px;border-color:#e3e3e3 #a0a0a0 #a0a0a0 #e3e3e3;"></div>
<svg style="left:436px;top:65px" width="3" height="2" shape-rendering="crispEdges"><path d="M1 0h1v1h1v1h-3v-1h1z" fill="#000"/></svg>
<svg style="left:436px;top:78px" width="3" height="2" shape-rendering="crispEdges"><path d="M0 0h3v1h-1v1h-1v-1h-1z" fill="#000"/></svg>
<div style="left:447px;top:60px;width:83px;height:22px;background:#f0f0f0;border-style:solid;border-width:1px;border-color:#fff #696969 #696969 #fff;"></div>
<div style="left:448px;top:61px;width:81px;height:20px;border-style:solid;border-width:1px;border-color:#e3e3e3 #a0a0a0 #a0a0a0 #e3e3e3;"></div>
<svg style="left:456px;top:65px" width="17" height="16" shape-rendering="crispEdges">
<path d="M6 0H14V3L13 6H4L5 3Z" fill="#fff"/>
<path d="M6 0h8v1h-8zM13 1h1v2h-1zM5 1h1v2h-1zM4 3h1v2h-1zM7 2h5v1h-5zM6 4h4v1h-4z" fill="#000"/>
<path d="M3 5h12v1h-12zM1 6h15v9h-15zM0 8h1v6h-1zM2 15h12v1h-12z" fill="#000"/>
<path d="M2 7h11v1h-11zM1 10h11v2h-11zM2 13h11v1h-11z" fill="#a8a8a8"/>
<path d="M8 10h3v1h-3z" fill="#fff"/>
<path d="M14 6h1v1h-1zM15 8h1v1h-1zM14 12h1v1h-1z" fill="#bbb"/>
</svg>
<div class="t" style="left:477px;top:66px;color:#0000a0;">完整打印</div>
<div style="left:536px;top:60px;width:64px;height:22px;background:#f0f0f0;border-style:solid;border-width:1px;border-color:#fff #696969 #696969 #fff;"></div>
<div style="left:537px;top:61px;width:62px;height:20px;border-style:solid;border-width:1px;border-color:#e3e3e3 #a0a0a0 #a0a0a0 #e3e3e3;"></div>
<div class="t" style="left:545px;top:66px;color:#000;">打当前页</div>
<div class="t" style="left:608px;top:66px;color:#000;">指定范围打印</div>
<div style="left:681px;top:61px;width:31px;height:20px;background:#fff;border-style:solid;border-width:1px;border-color:#a0a0a0 #fff #fff #a0a0a0;"></div>
<div style="left:682px;top:62px;width:29px;height:18px;border-style:solid;border-width:1px;border-color:#696969 #e3e3e3 #e3e3e3 #696969;"></div>
<div class="t" style="left:685px;top:65px;color:#000;">1</div>
<div style="left:714px;top:61px;width:14px;height:9px;background:#f0f0f0;border-style:solid;border-width:1px;border-color:#fff #696969 #696969 #fff;"></div>
<div style="left:715px;top:62px;width:12px;height:7px;border-style:solid;border-width:1px;border-color:#e3e3e3 #a0a0a0 #a0a0a0 #e3e3e3;"></div>
<div style="left:714px;top:73px;width:14px;height:9px;background:#f0f0f0;border-style:solid;border-width:1px;border-color:#fff #696969 #696969 #fff;"></div>
<div style="left:715px;top:74px;width:12px;height:7px;border-style:solid;border-width:1px;border-color:#e3e3e3 #a0a0a0 #a0a0a0 #e3e3e3;"></div>
<svg style="left:720px;top:65px" width="3" height="2" shape-rendering="crispEdges"><path d="M1 0h1v1h1v1h-3v-1h1z" fill="#a0a0a0"/></svg>
<svg style="left:720px;top:78px" width="3" height="2" shape-rendering="crispEdges"><path d="M0 0h3v1h-1v1h-1v-1h-1z" fill="#a0a0a0"/></svg>
<div style="left:736px;top:61px;width:31px;height:20px;background:#fff;border-style:solid;border-width:1px;border-color:#a0a0a0 #fff #fff #a0a0a0;"></div>
<div style="left:737px;top:62px;width:29px;height:18px;border-style:solid;border-width:1px;border-color:#696969 #e3e3e3 #e3e3e3 #696969;"></div>
<div class="t" style="left:740px;top:65px;color:#000;">1</div>
<div style="left:769px;top:61px;width:14px;height:9px;background:#f0f0f0;border-style:solid;border-width:1px;border-color:#fff #696969 #696969 #fff;"></div>
<div style="left:770px;top:62px;width:12px;height:7px;border-style:solid;border-width:1px;border-color:#e3e3e3 #a0a0a0 #a0a0a0 #e3e3e3;"></div>
<div style="left:769px;top:73px;width:14px;height:9px;background:#f0f0f0;border-style:solid;border-width:1px;border-color:#fff #696969 #696969 #fff;"></div>
<div style="left:770px;top:74px;width:12px;height:7px;border-style:solid;border-width:1px;border-color:#e3e3e3 #a0a0a0 #a0a0a0 #e3e3e3;"></div>
<svg style="left:775px;top:65px" width="3" height="2" shape-rendering="crispEdges"><path d="M1 0h1v1h1v1h-3v-1h1z" fill="#a0a0a0"/></svg>
<svg style="left:775px;top:78px" width="3" height="2" shape-rendering="crispEdges"><path d="M0 0h3v1h-1v1h-1v-1h-1z" fill="#a0a0a0"/></svg>
<div style="left:784px;top:60px;width:31px;height:22px;background:#f0f0f0;border-style:solid;border-width:1px;border-color:#fff #696969 #696969 #fff;"></div>
<div style="left:785px;top:61px;width:29px;height:20px;border-style:solid;border-width:1px;border-color:#e3e3e3 #a0a0a0 #a0a0a0 #e3e3e3;"></div>
<div class="t" style="left:788px;top:66px;color:#800000;">打印</div>
<div style="left:12px;top:92px;width:11px;height:11px;background:#fff;border-style:solid;border-width:1px;border-color:#a0a0a0 #fff #fff #a0a0a0;"></div>
<div style="left:13px;top:93px;width:9px;height:9px;border-style:solid;border-width:1px;border-color:#696969 #e3e3e3 #e3e3e3 #696969;"></div>
<div class="t" style="left:30px;top:91px;color:#000;">固定每页行数</div>
<div style="left:115px;top:87px;width:40px;height:20px;background:#fff;border-style:solid;border-width:1px;border-color:#a0a0a0 #fff #fff #a0a0a0;"></div>
<div style="left:116px;top:88px;width:38px;height:18px;border-style:solid;border-width:1px;border-color:#696969 #e3e3e3 #e3e3e3 #696969;"></div>
<div class="t" style="left:119px;top:91px;color:#a0a0a0;">0</div>
<div class="t" style="left:161px;top:91px;color:#000;">一张纸拆分横向</div>
<div style="left:249px;top:87px;width:29px;height:20px;background:#fff;border-style:solid;border-width:1px;border-color:#a0a0a0 #fff #fff #a0a0a0;"></div>
<div style="left:250px;top:88px;width:27px;height:18px;border-style:solid;border-width:1px;border-color:#696969 #e3e3e3 #e3e3e3 #696969;"></div>
<div class="t" style="left:253px;top:91px;color:#000;">1</div>
<div style="left:280px;top:87px;width:14px;height:9px;background:#f0f0f0;border-style:solid;border-width:1px;border-color:#fff #696969 #696969 #fff;"></div>
<div style="left:281px;top:88px;width:12px;height:7px;border-style:solid;border-width:1px;border-color:#e3e3e3 #a0a0a0 #a0a0a0 #e3e3e3;"></div>
<div style="left:280px;top:99px;width:14px;height:9px;background:#f0f0f0;border-style:solid;border-width:1px;border-color:#fff #696969 #696969 #fff;"></div>
<div style="left:281px;top:100px;width:12px;height:7px;border-style:solid;border-width:1px;border-color:#e3e3e3 #a0a0a0 #a0a0a0 #e3e3e3;"></div>
<svg style="left:286px;top:91px" width="3" height="2" shape-rendering="crispEdges"><path d="M1 0h1v1h1v1h-3v-1h1z" fill="#000"/></svg>
<svg style="left:286px;top:104px" width="3" height="2" shape-rendering="crispEdges"><path d="M0 0h3v1h-1v1h-1v-1h-1z" fill="#000"/></svg>
<div class="t" style="left:305px;top:91px;color:#000;">纵向</div>
<div style="left:330px;top:87px;width:29px;height:20px;background:#fff;border-style:solid;border-width:1px;border-color:#a0a0a0 #fff #fff #a0a0a0;"></div>
<div style="left:331px;top:88px;width:27px;height:18px;border-style:solid;border-width:1px;border-color:#696969 #e3e3e3 #e3e3e3 #696969;"></div>
<div class="t" style="left:334px;top:91px;color:#000;">1</div>
<div style="left:361px;top:87px;width:14px;height:9px;background:#f0f0f0;border-style:solid;border-width:1px;border-color:#fff #696969 #696969 #fff;"></div>
<div style="left:362px;top:88px;width:12px;height:7px;border-style:solid;border-width:1px;border-color:#e3e3e3 #a0a0a0 #a0a0a0 #e3e3e3;"></div>
<div style="left:361px;top:99px;width:14px;height:9px;background:#f0f0f0;border-style:solid;border-width:1px;border-color:#fff #696969 #696969 #fff;"></div>
<div style="left:362px;top:100px;width:12px;height:7px;border-style:solid;border-width:1px;border-color:#e3e3e3 #a0a0a0 #a0a0a0 #e3e3e3;"></div>
<svg style="left:367px;top:91px" width="3" height="2" shape-rendering="crispEdges"><path d="M1 0h1v1h1v1h-3v-1h1z" fill="#000"/></svg>
<svg style="left:367px;top:104px" width="3" height="2" shape-rendering="crispEdges"><path d="M0 0h3v1h-1v1h-1v-1h-1z" fill="#000"/></svg>
<div style="left:390px;top:92px;width:11px;height:11px;background:#fff;border-style:solid;border-width:1px;border-color:#a0a0a0 #fff #fff #a0a0a0;"></div>
<div style="left:391px;top:93px;width:9px;height:9px;border-style:solid;border-width:1px;border-color:#696969 #e3e3e3 #e3e3e3 #696969;"></div>
<div class="t" style="left:408px;top:91px;color:#000;">可和新单据合打一张</div>
<div style="left:9px;top:120px;width:1px;height:589px;background:#696969"></div>
<div style="left:12px;top:144px;width:876px;height:563px;background:#f0f0f0"></div>
<div style="left:14px;top:146px;width:874px;height:561px;background:#fff"></div>
<div style="left:10px;top:142px;width:879px;height:1px;background:#fff"></div>
<div style="left:10px;top:142px;width:1px;height:566px;background:#fff"></div>
<div style="left:11px;top:143px;width:877px;height:1px;background:#e3e3e3"></div>
<div style="left:11px;top:143px;width:1px;height:564px;background:#e3e3e3"></div>
<div style="left:888px;top:143px;width:1px;height:565px;background:#a0a0a0"></div>
<div style="left:10px;top:707px;width:879px;height:1px;background:#a0a0a0"></div>
<div style="left:889px;top:142px;width:1px;height:567px;background:#696969"></div>
<div style="left:9px;top:708px;width:881px;height:1px;background:#696969"></div>
<div style="left:9px;top:710px;width:882px;height:1px;background:#fff"></div>
<div style="left:13px;top:123px;width:57px;height:19px;background:#f0f0f0;border-left:1px solid #fff;border-top:1px solid #fff;border-radius:2px 2px 0 0"></div>
<div style="left:70px;top:124px;width:1px;height:18px;background:#a0a0a0"></div>
<div style="left:71px;top:124px;width:1px;height:18px;background:#696969"></div>
<div class="t" style="left:18px;top:126px;color:#000;">打印预览</div>
<div style="left:73px;top:123px;width:58px;height:19px;background:#f0f0f0;border-left:1px solid #fff;border-top:1px solid #fff;border-radius:2px 2px 0 0"></div>
<div class="t" style="left:78px;top:126px;color:#000;">参数数据</div>
<div style="left:194px;top:123px;width:80px;height:19px;background:#f0f0f0;border-left:1px solid #fff;border-top:1px solid #fff;border-radius:2px 2px 0 0"></div>
<div style="left:274px;top:124px;width:1px;height:18px;background:#a0a0a0"></div>
<div style="left:275px;top:124px;width:1px;height:18px;background:#696969"></div>
<div class="t" style="left:198px;top:126px;color:#000;">扩展明细数据</div>
<div style="left:276px;top:123px;width:70px;height:19px;background:#f0f0f0;border-left:1px solid #fff;border-top:1px solid #fff;border-radius:2px 2px 0 0"></div>
<div style="left:346px;top:124px;width:1px;height:18px;background:#a0a0a0"></div>
<div style="left:347px;top:124px;width:1px;height:18px;background:#696969"></div>
<div class="t" style="left:282px;top:126px;color:#000;">条码打印机</div>
<div style="left:131px;top:120px;width:61px;height:23px;background:#f0f0f0;border-left:1px solid #fff;border-top:1px solid #fff;border-radius:2px 2px 0 0"></div>
<div style="left:192px;top:121px;width:1px;height:22px;background:#a0a0a0"></div>
<div style="left:193px;top:121px;width:1px;height:22px;background:#696969"></div>
<div class="t" style="left:137px;top:124px;color:#000;">明细数据</div>
<div style="left:14px;top:146px;width:49px;height:23px;background:#f4e2ec"></div>
<div style="left:63px;top:146px;width:72px;height:23px;background:#dcebe2"></div>
<div style="left:135px;top:146px;width:90px;height:23px;background:#dcebe2"></div>
<div style="left:225px;top:146px;width:90px;height:23px;background:#dcebe2"></div>
<div style="left:315px;top:146px;width:108px;height:23px;background:#dcebe2"></div>
<div style="left:423px;top:146px;width:99px;height:23px;background:#dcebe2"></div>
<div style="left:522px;top:146px;width:72px;height:23px;background:#dcebe2"></div>
<div style="left:594px;top:146px;width:90px;height:23px;background:#dcebe2"></div>
<div style="left:684px;top:146px;width:45px;height:23px;background:#dcebe2"></div>
<div style="left:14px;top:169px;width:49px;height:24px;background:#dcebe2"></div>
<div style="left:63px;top:169px;width:72px;height:24px;background:#4f60ea"></div>
<div style="left:135px;top:169px;width:90px;height:24px;background:#c0fcd8"></div>
<div style="left:225px;top:169px;width:90px;height:24px;background:#c0fcd8"></div>
<div style="left:315px;top:169px;width:108px;height:24px;background:#c0fcd8"></div>
<div style="left:423px;top:169px;width:99px;height:24px;background:#c0fcd8"></div>
<div style="left:522px;top:169px;width:72px;height:24px;background:#c0fcd8"></div>
<div style="left:594px;top:169px;width:90px;height:24px;background:#c0fcd8"></div>
<div style="left:684px;top:169px;width:45px;height:24px;background:#c0fcd8"></div>
<div style="left:14px;top:193px;width:49px;height:24px;background:#dcebe2"></div>
<div style="left:63px;top:193px;width:72px;height:24px;background:#ffffff"></div>
<div style="left:135px;top:193px;width:90px;height:24px;background:#ffffff"></div>
<div style="left:225px;top:193px;width:90px;height:24px;background:#ffffff"></div>
<div style="left:315px;top:193px;width:108px;height:24px;background:#ffffff"></div>
<div style="left:423px;top:193px;width:99px;height:24px;background:#ffffff"></div>
<div style="left:522px;top:193px;width:72px;height:24px;background:#ffffff"></div>
<div style="left:594px;top:193px;width:90px;height:24px;background:#ffffff"></div>
<div style="left:684px;top:193px;width:45px;height:24px;background:#ffffff"></div>
<div style="left:14px;top:217px;width:49px;height:24px;background:#dcebe2"></div>
<div style="left:63px;top:217px;width:72px;height:24px;background:#f1fdfa"></div>
<div style="left:135px;top:217px;width:90px;height:24px;background:#f1fdfa"></div>
<div style="left:225px;top:217px;width:90px;height:24px;background:#f1fdfa"></div>
<div style="left:315px;top:217px;width:108px;height:24px;background:#f1fdfa"></div>
<div style="left:423px;top:217px;width:99px;height:24px;background:#f1fdfa"></div>
<div style="left:522px;top:217px;width:72px;height:24px;background:#f1fdfa"></div>
<div style="left:594px;top:217px;width:90px;height:24px;background:#f1fdfa"></div>
<div style="left:684px;top:217px;width:45px;height:24px;background:#f1fdfa"></div>
<div style="left:14px;top:241px;width:49px;height:24px;background:#dcebe2"></div>
<div style="left:63px;top:241px;width:72px;height:24px;background:#ffffff"></div>
<div style="left:135px;top:241px;width:90px;height:24px;background:#ffffff"></div>
<div style="left:225px;top:241px;width:90px;height:24px;background:#ffffff"></div>
<div style="left:315px;top:241px;width:108px;height:24px;background:#ffffff"></div>
<div style="left:423px;top:241px;width:99px;height:24px;background:#ffffff"></div>
<div style="left:522px;top:241px;width:72px;height:24px;background:#ffffff"></div>
<div style="left:594px;top:241px;width:90px;height:24px;background:#ffffff"></div>
<div style="left:684px;top:241px;width:45px;height:24px;background:#ffffff"></div>
<div style="left:14px;top:265px;width:49px;height:24px;background:#dcebe2"></div>
<div style="left:63px;top:265px;width:72px;height:24px;background:#f1fdfa"></div>
<div style="left:135px;top:265px;width:90px;height:24px;background:#f1fdfa"></div>
<div style="left:225px;top:265px;width:90px;height:24px;background:#f1fdfa"></div>
<div style="left:315px;top:265px;width:108px;height:24px;background:#f1fdfa"></div>
<div style="left:423px;top:265px;width:99px;height:24px;background:#f1fdfa"></div>
<div style="left:522px;top:265px;width:72px;height:24px;background:#f1fdfa"></div>
<div style="left:594px;top:265px;width:90px;height:24px;background:#f1fdfa"></div>
<div style="left:684px;top:265px;width:45px;height:24px;background:#f1fdfa"></div>
<div style="left:14px;top:289px;width:49px;height:24px;background:#dcebe2"></div>
<div style="left:63px;top:289px;width:72px;height:24px;background:#ffffff"></div>
<div style="left:135px;top:289px;width:90px;height:24px;background:#ffffff"></div>
<div style="left:225px;top:289px;width:90px;height:24px;background:#ffffff"></div>
<div style="left:315px;top:289px;width:108px;height:24px;background:#ffffff"></div>
<div style="left:423px;top:289px;width:99px;height:24px;background:#ffffff"></div>
<div style="left:522px;top:289px;width:72px;height:24px;background:#ffffff"></div>
<div style="left:594px;top:289px;width:90px;height:24px;background:#ffffff"></div>
<div style="left:684px;top:289px;width:45px;height:24px;background:#ffffff"></div>
<div style="left:14px;top:146px;width:1px;height:168px;background:#a6c4ae"></div>
<div style="left:63px;top:146px;width:1px;height:168px;background:#a6c4ae"></div>
<div style="left:135px;top:146px;width:1px;height:168px;background:#a6c4ae"></div>
<div style="left:225px;top:146px;width:1px;height:168px;background:#a6c4ae"></div>
<div style="left:315px;top:146px;width:1px;height:168px;background:#a6c4ae"></div>
<div style="left:423px;top:146px;width:1px;height:168px;background:#a6c4ae"></div>
<div style="left:522px;top:146px;width:1px;height:168px;background:#a6c4ae"></div>
<div style="left:594px;top:146px;width:1px;height:168px;background:#a6c4ae"></div>
<div style="left:684px;top:146px;width:1px;height:168px;background:#a6c4ae"></div>
<div style="left:729px;top:146px;width:1px;height:168px;background:#a6c4ae"></div>
<div style="left:14px;top:146px;width:716px;height:1px;background:#a6c4ae"></div>
<div style="left:14px;top:169px;width:716px;height:1px;background:#a6c4ae"></div>
<div style="left:14px;top:193px;width:716px;height:1px;background:#a6c4ae"></div>
<div style="left:14px;top:217px;width:716px;height:1px;background:#a6c4ae"></div>
<div style="left:14px;top:241px;width:716px;height:1px;background:#a6c4ae"></div>
<div style="left:14px;top:265px;width:716px;height:1px;background:#a6c4ae"></div>
<div style="left:14px;top:289px;width:716px;height:1px;background:#a6c4ae"></div>
<div style="left:14px;top:313px;width:716px;height:1px;background:#a6c4ae"></div>
<div class="t" style="left:15px;top:151px;width:48px;text-align:center;color:#141464;letter-spacing:0.4px;-webkit-text-stroke:0.1px">−</div>
<div class="t" style="left:64px;top:151px;width:71px;text-align:center;color:#141464;letter-spacing:0.4px;-webkit-text-stroke:0.1px">asset_no</div>
<div class="t" style="left:136px;top:151px;width:89px;text-align:center;color:#141464;letter-spacing:0.4px;-webkit-text-stroke:0.1px">asset_name</div>
<div class="t" style="left:226px;top:151px;width:89px;text-align:center;color:#141464;letter-spacing:0.4px;-webkit-text-stroke:0.1px">asset_type</div>
<div class="t" style="left:316px;top:151px;width:107px;text-align:center;color:#141464;letter-spacing:0.4px;-webkit-text-stroke:0.1px">manager_dept</div>
<div class="t" style="left:424px;top:151px;width:98px;text-align:center;color:#141464;letter-spacing:0.4px;-webkit-text-stroke:0.1px">manager_emp</div>
<div class="t" style="left:523px;top:151px;width:71px;text-align:center;color:#141464;letter-spacing:0.4px;-webkit-text-stroke:0.1px">asset_id</div>
<div class="t" style="left:595px;top:151px;width:89px;text-align:center;color:#141464;letter-spacing:0.4px;-webkit-text-stroke:0.1px">asset_spec</div>
<div class="t" style="left:685px;top:151px;width:44px;text-align:center;color:#141464;letter-spacing:0.4px;-webkit-text-stroke:0.1px">place</div>
<div class="t" style="left:15px;top:175px;width:48px;text-align:center;color:#141464">1</div>
<div class="t" style="left:68px;top:175px;color:#fff;letter-spacing:0.4px;-webkit-text-stroke:0">A0105002</div>
<div class="t" style="left:140px;top:175px;color:#000;letter-spacing:0.4px">沙发</div>
<div class="t" style="left:230px;top:175px;color:#000;letter-spacing:0.4px">电子设备</div>
<div class="t" style="left:320px;top:175px;color:#000;letter-spacing:0.4px">生产部</div>
<div class="t" style="left:428px;top:175px;color:#000;letter-spacing:0.4px">马永亮</div>
<div class="t" style="left:527px;top:175px;color:#000;letter-spacing:0.4px;-webkit-text-stroke:0">52002</div>
<div class="t" style="left:599px;top:175px;color:#000;letter-spacing:0.4px;-webkit-text-stroke:0">3+2</div>
<div class="t" style="left:15px;top:199px;width:48px;text-align:center;color:#141464">2</div>
<div class="t" style="left:68px;top:199px;color:#000;letter-spacing:0.4px;-webkit-text-stroke:0">A0105002</div>
<div class="t" style="left:140px;top:199px;color:#000;letter-spacing:0.4px">沙发</div>
<div class="t" style="left:230px;top:199px;color:#000;letter-spacing:0.4px">电子设备</div>
<div class="t" style="left:320px;top:199px;color:#000;letter-spacing:0.4px">生产部</div>
<div class="t" style="left:428px;top:199px;color:#000;letter-spacing:0.4px">马永亮</div>
<div class="t" style="left:527px;top:199px;color:#000;letter-spacing:0.4px;-webkit-text-stroke:0">52003</div>
<div class="t" style="left:599px;top:199px;color:#000;letter-spacing:0.4px;-webkit-text-stroke:0">3+2</div>
<div class="t" style="left:15px;top:223px;width:48px;text-align:center;color:#141464">3</div>
<div class="t" style="left:68px;top:223px;color:#000;letter-spacing:0.4px;-webkit-text-stroke:0">A0105002</div>
<div class="t" style="left:140px;top:223px;color:#000;letter-spacing:0.4px">沙发</div>
<div class="t" style="left:230px;top:223px;color:#000;letter-spacing:0.4px">电子设备</div>
<div class="t" style="left:320px;top:223px;color:#000;letter-spacing:0.4px">生产部</div>
<div class="t" style="left:428px;top:223px;color:#000;letter-spacing:0.4px">马永亮</div>
<div class="t" style="left:527px;top:223px;color:#000;letter-spacing:0.4px;-webkit-text-stroke:0">52004</div>
<div class="t" style="left:599px;top:223px;color:#000;letter-spacing:0.4px;-webkit-text-stroke:0">3+2</div>
<div class="t" style="left:15px;top:247px;width:48px;text-align:center;color:#141464">4</div>
<div class="t" style="left:68px;top:247px;color:#000;letter-spacing:0.4px;-webkit-text-stroke:0">A0105002</div>
<div class="t" style="left:140px;top:247px;color:#000;letter-spacing:0.4px">沙发2</div>
<div class="t" style="left:230px;top:247px;color:#000;letter-spacing:0.4px">电子设备</div>
<div class="t" style="left:320px;top:247px;color:#000;letter-spacing:0.4px">生产部</div>
<div class="t" style="left:428px;top:247px;color:#000;letter-spacing:0.4px">马永亮</div>
<div class="t" style="left:527px;top:247px;color:#000;letter-spacing:0.4px;-webkit-text-stroke:0">52001</div>
<div class="t" style="left:599px;top:247px;color:#000;letter-spacing:0.4px;-webkit-text-stroke:0">3+2</div>
<div class="t" style="left:15px;top:271px;width:48px;text-align:center;color:#141464">5</div>
<div class="t" style="left:68px;top:271px;color:#000;letter-spacing:0.4px;-webkit-text-stroke:0">A0105002</div>
<div class="t" style="left:140px;top:271px;color:#000;letter-spacing:0.4px">沙发</div>
<div class="t" style="left:230px;top:271px;color:#000;letter-spacing:0.4px">电子设备</div>
<div class="t" style="left:320px;top:271px;color:#000;letter-spacing:0.4px">生产部</div>
<div class="t" style="left:428px;top:271px;color:#000;letter-spacing:0.4px">马永亮</div>
<div class="t" style="left:527px;top:271px;color:#000;letter-spacing:0.4px;-webkit-text-stroke:0">51002</div>
<div class="t" style="left:599px;top:271px;color:#000;letter-spacing:0.4px;-webkit-text-stroke:0">3+2</div>
<div class="t" style="left:15px;top:295px;width:48px;text-align:center;color:#141464">6</div>
<div class="t" style="left:68px;top:295px;color:#000;letter-spacing:0.4px;-webkit-text-stroke:0">A0105002</div>
<div class="t" style="left:140px;top:295px;color:#000;letter-spacing:0.4px">沙发</div>
<div class="t" style="left:230px;top:295px;color:#000;letter-spacing:0.4px">电子设备</div>
<div class="t" style="left:320px;top:295px;color:#000;letter-spacing:0.4px">生产部</div>
<div class="t" style="left:428px;top:295px;color:#000;letter-spacing:0.4px">马永亮</div>
<div class="t" style="left:527px;top:295px;color:#000;letter-spacing:0.4px;-webkit-text-stroke:0">52005</div>
<div class="t" style="left:599px;top:295px;color:#000;letter-spacing:0.4px;-webkit-text-stroke:0">3+2</div>
<div style="left:8px;top:713px;width:884px;height:1px;background:#a0a0a0"></div>
<div class="t" style="left:14px;top:716px;color:#000;">总页数：1</div>
<svg style="left:878px;top:718px" width="14" height="14"><path d="M13 2 L2 13 M13 6 L6 13 M13 10 L10 13" stroke="#8e8e8e" stroke-width="1.4"/></svg>
</body></html>
